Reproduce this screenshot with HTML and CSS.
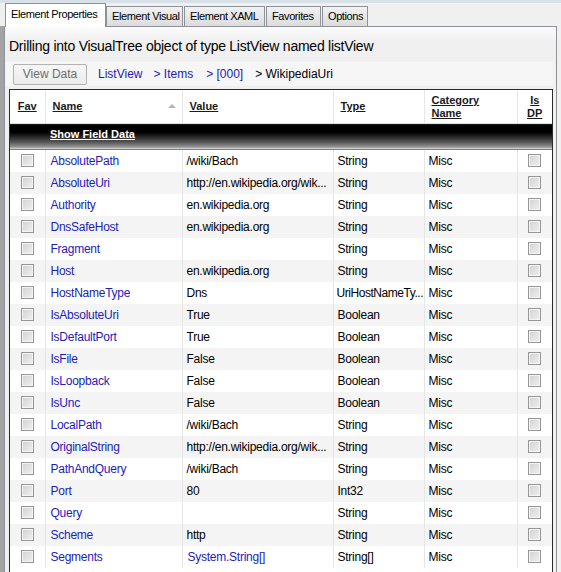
FILE: index.html
```html
<!DOCTYPE html>
<html>
<head>
<meta charset="utf-8">
<link rel="stylesheet" href="styles.css">
</head>
<body>
<div class="window">
  <div class="tabs">
    <div class="tab selected t1">Element Properties</div>
    <div class="tab t2">Element Visual</div>
    <div class="tab t3">Element XAML</div>
    <div class="tab t4">Favorites</div>
    <div class="tab t5">Options</div>
  </div>
  <div class="frame">
    <div class="panel">
      <div class="title">Drilling into VisualTree object of type ListView named listView</div>
      <div class="crumbs">
        <div class="btn">View Data</div>
        <span class="crumb link c1">ListView</span>
        <span class="crumb link c2">&gt; Items</span>
        <span class="crumb link c3">&gt; [000]</span>
        <span class="crumb">&gt; WikipediaUri</span>
      </div>
      <div class="grid">
        <table>
          <colgroup>
            <col class="w-fav"><col class="w-name"><col class="w-value"><col class="w-type"><col class="w-cat"><col class="w-dp">
          </colgroup>
          <thead>
            <tr class="head">
              <th class="center"><u>Fav</u></th>
              <th class="pad"><u>Name</u><span class="sort"></span></th>
              <th class="pad"><u>Value</u></th>
              <th class="pad"><u>Type</u></th>
              <th class="pad"><u>Category<br>Name</u></th>
              <th class="center"><u>Is<br>DP</u></th>
            </tr>
          </thead>
          <tbody>
            <tr class="group"><td></td><td colspan="5"><u>Show Field Data</u></td></tr>
            <tr><td class="cb"><span class="box"></span></td><td class="name">AbsolutePath</td><td>/wiki/Bach</td><td>String</td><td>Misc</td><td class="cb"><span class="box"></span></td></tr>
            <tr><td class="cb"><span class="box"></span></td><td class="name">AbsoluteUri</td><td>http://en.wikipedia.org/wik...</td><td>String</td><td>Misc</td><td class="cb"><span class="box"></span></td></tr>
            <tr><td class="cb"><span class="box"></span></td><td class="name">Authority</td><td>en.wikipedia.org</td><td>String</td><td>Misc</td><td class="cb"><span class="box"></span></td></tr>
            <tr><td class="cb"><span class="box"></span></td><td class="name">DnsSafeHost</td><td>en.wikipedia.org</td><td>String</td><td>Misc</td><td class="cb"><span class="box"></span></td></tr>
            <tr><td class="cb"><span class="box"></span></td><td class="name">Fragment</td><td></td><td>String</td><td>Misc</td><td class="cb"><span class="box"></span></td></tr>
            <tr><td class="cb"><span class="box"></span></td><td class="name">Host</td><td>en.wikipedia.org</td><td>String</td><td>Misc</td><td class="cb"><span class="box"></span></td></tr>
            <tr><td class="cb"><span class="box"></span></td><td class="name">HostNameType</td><td>Dns</td><td class="tight">UriHostNameTy...</td><td>Misc</td><td class="cb"><span class="box"></span></td></tr>
            <tr><td class="cb"><span class="box"></span></td><td class="name">IsAbsoluteUri</td><td>True</td><td>Boolean</td><td>Misc</td><td class="cb"><span class="box"></span></td></tr>
            <tr><td class="cb"><span class="box"></span></td><td class="name">IsDefaultPort</td><td>True</td><td>Boolean</td><td>Misc</td><td class="cb"><span class="box"></span></td></tr>
            <tr><td class="cb"><span class="box"></span></td><td class="name">IsFile</td><td>False</td><td>Boolean</td><td>Misc</td><td class="cb"><span class="box"></span></td></tr>
            <tr><td class="cb"><span class="box"></span></td><td class="name">IsLoopback</td><td>False</td><td>Boolean</td><td>Misc</td><td class="cb"><span class="box"></span></td></tr>
            <tr><td class="cb"><span class="box"></span></td><td class="name">IsUnc</td><td>False</td><td>Boolean</td><td>Misc</td><td class="cb"><span class="box"></span></td></tr>
            <tr><td class="cb"><span class="box"></span></td><td class="name">LocalPath</td><td>/wiki/Bach</td><td>String</td><td>Misc</td><td class="cb"><span class="box"></span></td></tr>
            <tr><td class="cb"><span class="box"></span></td><td class="name">OriginalString</td><td>http://en.wikipedia.org/wik...</td><td>String</td><td>Misc</td><td class="cb"><span class="box"></span></td></tr>
            <tr><td class="cb"><span class="box"></span></td><td class="name">PathAndQuery</td><td>/wiki/Bach</td><td>String</td><td>Misc</td><td class="cb"><span class="box"></span></td></tr>
            <tr><td class="cb"><span class="box"></span></td><td class="name">Port</td><td>80</td><td>Int32</td><td>Misc</td><td class="cb"><span class="box"></span></td></tr>
            <tr><td class="cb"><span class="box"></span></td><td class="name">Query</td><td></td><td>String</td><td>Misc</td><td class="cb"><span class="box"></span></td></tr>
            <tr><td class="cb"><span class="box"></span></td><td class="name">Scheme</td><td>http</td><td>String</td><td>Misc</td><td class="cb"><span class="box"></span></td></tr>
            <tr><td class="cb"><span class="box"></span></td><td class="name">Segments</td><td class="name">System.String[]</td><td>String[]</td><td>Misc</td><td class="cb"><span class="box"></span></td></tr>
          </tbody>
        </table>
      </div>
    </div>
  </div>
</div>
</body>
</html>
```
FILE: styles.css
```css
* { box-sizing: border-box; }
html, body { margin: 0; padding: 0; }
body {
  font-family: "Liberation Sans", Arial, sans-serif;
  font-size: 12px;
  color: #000;
  background: #f0f0f0;
}
.window {
  width: 561px;
  height: 572px;
  overflow: hidden;
  background: #f0f0f0;
  border-top: 3px solid #d9e1e8;
}
.tabs {
  display: flex;
  align-items: flex-end;
  height: 23px;
  padding-left: 5px;
  position: relative;
  z-index: 2;
}
.tab {
  height: 20px;
  line-height: 18px;
  padding: 0 0 0 5px;
  border: 1px solid #8d9199;
  border-bottom: none;
  margin-right: 1px;
  background: linear-gradient(#f2f2f2, #dcdcdc);
  font-size: 11px;
  letter-spacing: -0.4px;
  white-space: nowrap;
  overflow: hidden;
}
.tab.selected {
  height: 24px;
  line-height: 21px;
  margin-bottom: -1px;
  background: #fff;
  margin-right: 0;
}
.t1 { width: 101px; }
.t2 { width: 77px; }
.t3 { width: 81px; }
.t4 { width: 55px; }
.t5 { width: 46px; }
.frame {
  border-left: 4px solid #a3a3a3;
  height: 560px;
}
.panel {
  width: 553px;
  height: 560px;
  border: 1px solid #8d9199;
  background: linear-gradient(#fcfcfc 0px, #f0f0f0 14px);
  padding: 0 3px 0 4px;
}
.title {
  font-size: 14px;
  line-height: 20px;
  margin-top: 9px;
  white-space: nowrap;
  letter-spacing: -0.25px;
}
.crumbs {
  display: flex;
  align-items: center;
  height: 24px;
  margin-top: 6px;
  background: #f6f6f6;
  margin-left: -4px;
  padding-left: 8px;
}
.btn {
  width: 74px;
  height: 21px;
  line-height: 19px;
  text-align: center;
  border: 1px solid #b2b2b2;
  border-radius: 2px;
  background: linear-gradient(#f6f6f6, #ececec);
  color: #6d6d6d;
  margin-right: 11px;
}
.crumb { white-space: nowrap; }
.link { color: #1c22b8; }
.c1 { margin-right: 11px; }
.c2 { margin-right: 13px; }
.c3 { margin-right: 12px; }
.grid {
  margin-top: 3px;
  border: 1px solid #2a2a2a;
  border-bottom: none;
  background: #fff;
  height: 500px;
  overflow: hidden;
}
table {
  border-collapse: collapse;
  table-layout: fixed;
  width: 542px;
}
.w-fav { width: 35px; }
.w-name { width: 137px; }
.w-value { width: 151px; }
.w-type { width: 91px; }
.w-cat { width: 93px; }
.w-dp { width: 35px; }
th {
  height: 33px;
  font-size: 11px;
  font-weight: bold;
  color: #1a1a1a;
  text-align: left;
  line-height: 13px;
  border-right: 1px solid #e6e6e6;
  border-bottom: 1px solid #dedede;
  background: #fff;
  padding: 1px 0 0 0;
  position: relative;
}
th:last-child { border-right: none; }
th.pad { padding-left: 7px; }
th.center { text-align: center; }
.sort {
  position: absolute;
  right: 6px;
  top: 14px;
  width: 0;
  height: 0;
  border-left: 4px solid transparent;
  border-right: 4px solid transparent;
  border-bottom: 4px solid #b4b4b4;
}
td {
  height: 22px;
  padding: 0 0 0 4px;
  white-space: nowrap;
  overflow: hidden;
  border-right: 1px solid #e6e6e6;
  font-size: 12px;
  letter-spacing: -0.25px;
}
td.tight { letter-spacing: -0.45px; padding-left: 3px; }
td:last-child { border-right: none; }
tbody tr:nth-child(odd) td { background: #f4f4f4; }
tbody tr:nth-child(even) td { background: #fff; }
td.name { color: #1c22b8; padding-left: 5px; }
td.cb { padding: 0; text-align: center; }
.box {
  display: inline-block;
  width: 13px;
  height: 13px;
  vertical-align: middle;
  border: 1px solid #979797;
  box-shadow: inset 0 0 0 1px #f4f4f4;
  background: linear-gradient(135deg, #d2d2d2, #f0f0f0);
  margin-top: -2px;
}
tbody tr.group td {
  height: 27px;
  background: linear-gradient(#2b2b2b 0px, #000 2px, #000 9px, #5a5a5a 19px, #9a9a9a 24px, #d4d4d4 25px, #fff 27px);
  color: #fff;
  font-weight: bold;
  font-size: 11px;
  letter-spacing: 0;
  padding-left: 5px;
  padding-bottom: 6px;
  border-right: none;
}
```
